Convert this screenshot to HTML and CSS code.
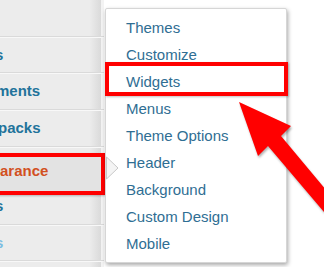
FILE: index.html
```html
<!DOCTYPE html>
<html lang="en">
<head>
    <meta charset="UTF-8">
    <meta name="viewport" content="width=device-width, initial-scale=1.0">
    <title>Appearance menu</title>
    <link rel="stylesheet" href="styles.css">
</head>
<body>
    <div class="screen">
        <ul class="sidebar">
            <li class="side-item side-blank"></li>
            <li class="side-item side-first"><span class="cut">s</span></li>
            <li class="side-item"><span class="cut-m">ments</span></li>
            <li class="side-item"><span class="cut-p">packs</span></li>
            <li class="side-item side-current">arance</li>
            <li class="side-item side-short"><span class="cut">s</span></li>
            <li class="side-item side-faded"><span class="cut">s</span></li>
            <li class="side-item side-blank"></li>
        </ul>

        <div class="flyout-wrap">
            <ul class="flyout">
                <li>Themes</li>
                <li>Customize</li>
                <li class="marked">Widgets</li>
                <li>Menus</li>
                <li>Theme Options</li>
                <li>Header</li>
                <li>Background</li>
                <li>Custom Design</li>
                <li>Mobile</li>
            </ul>
            <svg class="pointer" width="14" height="24" viewBox="0 0 14 24">
                <polygon points="0.5,1 12,12 0.5,23" fill="#f4f4f4" stroke="#c8c8c8" stroke-width="1"/>
            </svg>
        </div>

        <!-- annotation arrow over the menu -->
        <svg class="callout" width="324" height="267" viewBox="0 0 324 267">
            <polygon points="239,102 291,126 281,136 358,228 346,238 268,146 258,156" fill="#ff0000"/>
        </svg>
    </div>
</body>
</html>
```

FILE: styles.css
```css
/* page frame */
body {
    margin: 0;
    background-color: #fff;
    font-family: "Liberation Sans", Arial, sans-serif;
}

.screen {
    position: relative;
    width: 324px;
    height: 267px;
    overflow: hidden;
    display: flex;
    align-items: flex-start;
}

ul {
    list-style: none;
    margin: 0;
    padding: 0;
}

/* left admin menu */
.sidebar {
    width: 104px;
    height: 267px;
    flex-shrink: 0;
    background: linear-gradient(to right, #ececec 0, #ececec 86%, #dadada 97%, #f3f3f3 97%, #f3f3f3 100%);
    display: flex;
    flex-direction: column;
}

.side-item {
    flex-shrink: 0;
    height: 36px;
    line-height: 36px;
    border-bottom: 1px solid #dadada;
    box-shadow: 0 1px 0 #f8f8f8;
    font-size: 15px;
    font-weight: bold;
    color: #22739b;
    white-space: nowrap;
    overflow: hidden;
}

.side-first {
    height: 35px;
    line-height: 35px;
}

.side-current {
    margin: 6px -1px 0 -4px;
    height: 28px;
    line-height: 28px;
    padding: 0 0 6px 0;
    border: 4px solid #ff0000;
    background-color: #e3e3e3;
    color: #d2501f;
    box-shadow: 1px 1px 2px rgba(0, 0, 0, 0.25);
}

.side-short {
    height: 22px;
    line-height: 22px;
    padding-bottom: 7px;
}

.side-faded {
    height: 35px;
    line-height: 35px;
    color: #7cbde2;
}

.side-blank:last-child {
    border-bottom: none;
    box-shadow: none;
}

.cut {
    margin-left: -5px;
}

.cut-m {
    margin-left: -4px;
}

.cut-p {
    margin-left: -2px;
}

/* submenu flyout */
.flyout-wrap {
    position: relative;
    padding: 8px 0 0 1px;
}

.flyout {
    width: 180px;
    padding: 5px 0;
    background-color: #fff;
    border: 1px solid #d6d6d6;
    border-radius: 2px;
    box-shadow: 1px 2px 4px rgba(0, 0, 0, 0.35);
}

.flyout li {
    height: 27px;
    line-height: 27px;
    padding-left: 20px;
    font-size: 15px;
    color: #2f6e93;
    white-space: nowrap;
}

.flyout li.marked {
    margin: -6px -2px -1px -1px;
    height: 21px;
    line-height: 21px;
    padding: 5px 0 0 17px;
    border: 4px solid #ff0000;
    box-shadow: 1px 1px 2px rgba(0, 0, 0, 0.25);
}

.pointer {
    position: absolute;
    left: 2px;
    top: 156px;
}

.callout {
    position: absolute;
    left: 0;
    top: 0;
    filter: drop-shadow(1px 2px 1px rgba(0, 0, 0, 0.3));
}
```
